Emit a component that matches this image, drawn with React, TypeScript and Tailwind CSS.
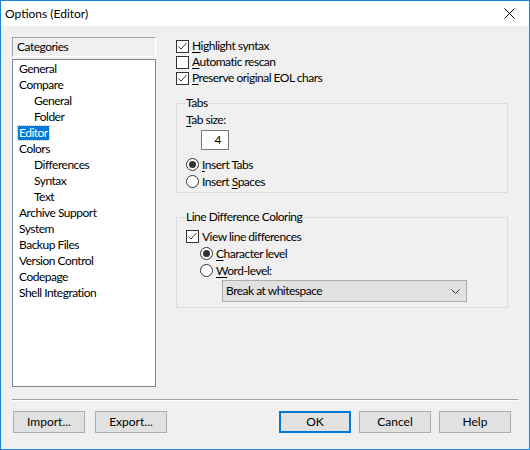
import React from "react";

const categories = [
  { label: "General", indent: false },
  { label: "Compare", indent: false },
  { label: "General", indent: true },
  { label: "Folder", indent: true },
  { label: "Editor", indent: false, selected: true },
  { label: "Colors", indent: false },
  { label: "Differences", indent: true },
  { label: "Syntax", indent: true },
  { label: "Text", indent: true },
  { label: "Archive Support", indent: false },
  { label: "System", indent: false },
  { label: "Backup Files", indent: false },
  { label: "Version Control", indent: false },
  { label: "Codepage", indent: false },
  { label: "Shell Integration", indent: false },
];

function Check({ checked }: { checked?: boolean }) {
  return (
    <span className="w-[13px] h-[13px] border border-[#333333] bg-white flex items-center justify-center shrink-0">
      {checked && (
        <svg width="11" height="11" viewBox="0 0 11 11">
          <path d="M1.5 5.5 L4 8 L9.5 2" fill="none" stroke="#333333" strokeWidth="1" />
        </svg>
      )}
    </span>
  );
}

function Radio({ checked }: { checked?: boolean }) {
  return (
    <span className="w-[13px] h-[13px] rounded-full border border-[#333333] bg-white flex items-center justify-center shrink-0">
      {checked && <span className="w-[7px] h-[7px] rounded-full bg-[#333333]" />}
    </span>
  );
}

function Mn({ k, rest }: { k: string; rest: string }) {
  return (
    <span>
      <span className="underline underline-offset-2">{k}</span>
      {rest}
    </span>
  );
}

function Button({ label, primary }: { label: string; primary?: boolean }) {
  return (
    <button
      className={
        "w-[72px] h-[22px] bg-[#e1e1e1] flex items-center justify-center text-[#000] " +
        (primary ? "border-2 border-[#0078d7]" : "border border-[#adadad]")
      }
    >
      {label}
    </button>
  );
}

export default function App() {
  return (
    <div
      className="w-[530px] h-[450px] border border-[#1883d7] bg-[#f0f0f0] flex flex-col text-[12px] text-black leading-[16px]"
      style={{ fontFamily: 'Lato, "Noto Sans", sans-serif' }}
    >
      {/* Title bar */}
      <div className="h-[25px] bg-white flex items-center justify-between pl-[4px] pr-[14px]">
        <span>Options (Editor)</span>
        <svg width="11" height="11" viewBox="0 0 11 11">
          <path d="M0.5 0.5 L10.5 10.5 M10.5 0.5 L0.5 10.5" stroke="#000" strokeWidth="1" />
        </svg>
      </div>

      <div className="flex flex-1 pl-[11px] pt-[11px] tracking-[-0.5px]">
        {/* Categories */}
        <div className="w-[144px] flex flex-col">
          <div className="h-[20px] border-t border-l border-[#a0a0a0] border-b border-r border-b-white border-r-white flex items-center pl-[4px]">
            Categories
          </div>
          <div className="mt-[2px] h-[328px] border border-[#828790] bg-white pt-[1px] pl-[4px]">
            {categories.map((c, i) => (
              <div key={i} className={"h-[16px] flex items-center " + (c.indent ? "pl-[16px]" : "pl-[1px]")}>
                {c.selected ? (
                  <span className="bg-[#0078d7] text-white px-[1px] outline outline-1 outline-dotted outline-[#ffbf00] leading-[14px]">
                    {c.label}
                  </span>
                ) : (
                  <span className="px-[1px]">{c.label}</span>
                )}
              </div>
            ))}
          </div>
        </div>

        {/* Editor options */}
        <div className="ml-[20px] w-[332px] flex flex-col">
          <div className="flex flex-col mt-[1px]">
            <label className="h-[16px] flex items-center gap-[3px]">
              <Check checked />
              <Mn k="H" rest="ighlight syntax" />
            </label>
            <label className="h-[16px] flex items-center gap-[3px]">
              <Check />
              <Mn k="A" rest="utomatic rescan" />
            </label>
            <label className="h-[16px] flex items-center gap-[3px]">
              <Check checked />
              <Mn k="P" rest="reserve original EOL chars" />
            </label>
          </div>

          <fieldset className="mt-[10px] h-[97px] border border-[#dcdcdc] pl-[9px] pr-[8px] pt-[0px]">
            <legend className="px-[0px] leading-[14px]">Tabs</legend>
            <div className="h-[16px] flex items-center mt-[2px]">
              <Mn k="T" rest="ab size:" />
            </div>
            <div className="ml-[15px] mt-[2px] w-[28px] h-[20px] bg-white border border-[#7a7a7a] flex items-center justify-end pr-[7px]">
              4
            </div>
            <div className="mt-[6px] flex flex-col">
              <label className="h-[17px] flex items-center gap-[3px]">
                <Radio checked />
                <Mn k="I" rest="nsert Tabs" />
              </label>
              <label className="h-[17px] flex items-center gap-[3px]">
                <Radio />
                <span>
                  Insert <Mn k="S" rest="paces" />
                </span>
              </label>
            </div>
          </fieldset>

          <fieldset className="mt-[17px] h-[98px] border border-[#dcdcdc] pl-[9px] pr-[8px]">
            <legend className="leading-[14px]">Line Difference Coloring</legend>
            <label className="h-[17px] flex items-center gap-[3px] mt-[4px]">
              <Check checked />
              <span>View line differences</span>
            </label>
            <div className="pl-[14px] flex flex-col">
              <label className="h-[17px] flex items-center gap-[3px]">
                <Radio checked />
                <Mn k="C" rest="haracter level" />
              </label>
              <label className="h-[17px] flex items-center gap-[3px]">
                <Radio />
                <Mn k="W" rest="ord-level:" />
              </label>
              <div className="ml-[22px] mt-[1px] w-[245px] h-[22px] bg-[#e1e1e1] border border-[#adadad] flex items-center justify-between pl-[3px] pr-[6px]">
                <span>Break at whitespace</span>
                <svg width="9" height="5" viewBox="0 0 9 5">
                  <path d="M0.5 0.5 L4.5 4.5 L8.5 0.5" fill="none" stroke="#333" strokeWidth="1" />
                </svg>
              </div>
            </div>
          </fieldset>
        </div>
      </div>

      {/* Separator */}
      <div className="mx-[11px] h-[2px] border-t border-[#a0a0a0] border-b border-b-white" />

      {/* Buttons */}
      <div className="h-[48px] flex items-start pt-[10px] pl-[12px] pr-[18px]">
        <Button label="Import..." />
        <div className="ml-[10px]">
          <Button label="Export..." />
        </div>
        <div className="ml-auto flex gap-[8px]">
          <Button label="OK" primary />
          <Button label="Cancel" />
          <Button label="Help" />
        </div>
      </div>
    </div>
  );
}
